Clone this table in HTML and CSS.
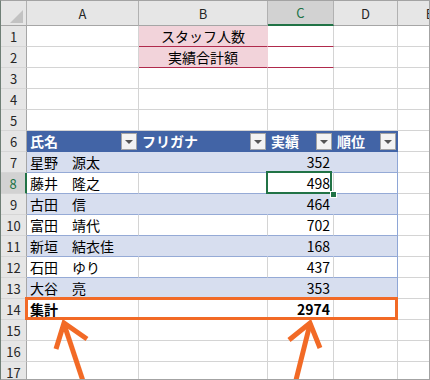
FILE: index.html
```html
<!DOCTYPE html>
<html lang="ja">
<head>
<meta charset="utf-8">
<title>スタッフ実績</title>
<link rel="stylesheet" href="styles.css">
</head>
<body>
<div class="frame">
  <div class="sheet">
    <!-- column headers -->
    <div class="ch corner"><span class="corner-tri"></span></div>
    <div class="ch">A</div>
    <div class="ch">B</div>
    <div class="ch ch-on">C</div>
    <div class="ch">D</div>
    <div class="ch">E</div>

    <!-- 1 -->
    <div class="rh">1</div>
    <div class="c"></div>
    <div class="c label">スタッフ人数</div>
    <div class="c input"></div>
    <div class="c"></div>
    <div class="c"></div>
    <!-- 2 -->
    <div class="rh">2</div>
    <div class="c"></div>
    <div class="c label">実績合計額</div>
    <div class="c input"></div>
    <div class="c"></div>
    <div class="c"></div>
    <!-- 3 -->
    <div class="rh">3</div>
    <div class="c"></div><div class="c"></div><div class="c"></div><div class="c"></div><div class="c"></div>
    <!-- 4 -->
    <div class="rh">4</div>
    <div class="c"></div><div class="c"></div><div class="c"></div><div class="c"></div><div class="c"></div>
    <!-- 5 -->
    <div class="rh">5</div>
    <div class="c"></div><div class="c"></div><div class="c"></div><div class="c"></div><div class="c"></div>

    <!-- 6: table header -->
    <div class="rh">6</div>
    <div class="c th"><span class="th-text">氏名</span><span class="dd"></span></div>
    <div class="c th"><span class="th-text">フリガナ</span><span class="dd"></span></div>
    <div class="c th"><span class="th-text">実績</span><span class="dd"></span></div>
    <div class="c th last"><span class="th-text">順位</span><span class="dd"></span></div>
    <div class="c"></div>

    <!-- 7 -->
    <div class="rh">7</div>
    <div class="c band">星野　源太</div>
    <div class="c band"></div>
    <div class="c band num">352</div>
    <div class="c band last"></div>
    <div class="c"></div>
    <!-- 8 -->
    <div class="rh rh-on">8</div>
    <div class="c row">藤井　隆之</div>
    <div class="c row"></div>
    <div class="c row num active">498<span class="sel"><span class="handle"></span></span></div>
    <div class="c row last"></div>
    <div class="c"></div>
    <!-- 9 -->
    <div class="rh">9</div>
    <div class="c band">古田　信</div>
    <div class="c band"></div>
    <div class="c band num">464</div>
    <div class="c band last"></div>
    <div class="c"></div>
    <!-- 10 -->
    <div class="rh">10</div>
    <div class="c row">富田　靖代</div>
    <div class="c row"></div>
    <div class="c row num">702</div>
    <div class="c row last"></div>
    <div class="c"></div>
    <!-- 11 -->
    <div class="rh">11</div>
    <div class="c band">新垣　結衣佳</div>
    <div class="c band"></div>
    <div class="c band num">168</div>
    <div class="c band last"></div>
    <div class="c"></div>
    <!-- 12 -->
    <div class="rh">12</div>
    <div class="c row">石田　ゆり</div>
    <div class="c row"></div>
    <div class="c row num">437</div>
    <div class="c row last"></div>
    <div class="c"></div>
    <!-- 13 -->
    <div class="rh">13</div>
    <div class="c band">大谷　亮</div>
    <div class="c band"></div>
    <div class="c band num">353</div>
    <div class="c band last"></div>
    <div class="c"></div>
    <!-- 14: total row -->
    <div class="rh">14</div>
    <div class="c total">集計</div>
    <div class="c total"></div>
    <div class="c total num">2974</div>
    <div class="c total last"></div>
    <div class="c"></div>
    <!-- 15 -->
    <div class="rh">15</div>
    <div class="c"></div><div class="c"></div><div class="c"></div><div class="c"></div><div class="c"></div>
    <!-- 16 -->
    <div class="rh">16</div>
    <div class="c"></div><div class="c"></div><div class="c"></div><div class="c"></div><div class="c"></div>
    <!-- 17 -->
    <div class="rh">17</div>
    <div class="c"></div><div class="c"></div><div class="c"></div><div class="c"></div><div class="c"></div>
  </div>

  <!-- callout: total row highlight and arrows -->
  <svg class="callout" width="430" height="380" viewBox="0 0 430 380">
    <rect x="26.5" y="298.5" width="370" height="20" fill="none" stroke="#f26a26" stroke-width="3"/>
    <g fill="none" stroke="#f26a26" stroke-width="5" stroke-linejoin="miter" stroke-linecap="butt">
      <line x1="84" y1="384" x2="64" y2="324"/>
      <polyline points="56,349 64,323 87,339"/>
      <line x1="295" y1="384" x2="310" y2="324"/>
      <polyline points="289,340 310,323 320,348"/>
    </g>
  </svg>
</div>
</body>
</html>
```

FILE: styles.css
```css
html, body {
  margin: 0;
  padding: 0;
  background: #ffffff;
}

.frame {
  position: relative;
  width: 430px;
  height: 380px;
  box-sizing: border-box;
  border: 1px solid #a3a3a3;
  border-left-color: #6f7f76;
  overflow: hidden;
  font-family: "Noto Sans CJK JP", "Noto Sans", sans-serif;
  color: #000;
}

.sheet {
  display: grid;
  grid-template-columns: 26px 112px 129px 66px 64px 64px;
  grid-template-rows: 25px repeat(17, 21px);
}

/* ordinary cells */
.c {
  box-sizing: border-box;
  border-right: 1px solid #d4d4d4;
  border-bottom: 1px solid #d4d4d4;
  display: flex;
  align-items: center;
  padding: 0 3px;
  font-size: 14px;
  line-height: 20px;
  white-space: nowrap;
  overflow: hidden;
}

.num {
  justify-content: flex-end;
}

/* column / row headers */
.ch {
  box-sizing: border-box;
  background: #e6e6e6;
  border-right: 1px solid #b1b1b1;
  border-bottom: 1px solid #a6a6a6;
  display: flex;
  align-items: center;
  justify-content: center;
  font-size: 13px;
  color: #262626;
}

.ch-on {
  background: #d2d2d2;
  color: #217346;
  border-bottom: 2px solid #217346;
}

.corner {
  position: relative;
}

.corner-tri {
  position: absolute;
  right: 3px;
  bottom: 2px;
  width: 0;
  height: 0;
  border-left: 13px solid transparent;
  border-bottom: 13px solid #c2c2c2;
}

.rh {
  box-sizing: border-box;
  background: #e6e6e6;
  border-right: 1px solid #a6a6a6;
  border-bottom: 1px solid #d6d6d6;
  display: flex;
  align-items: center;
  justify-content: center;
  font-size: 13px;
  color: #262626;
}

.rh-on {
  background: #d2d2d2;
  color: #217346;
  border-right: 2px solid #217346;
}

/* input block at the top */
.label {
  background: #f2d3da;
  border-right-color: #f2d3da;
  border-bottom-color: #b02a4c;
  justify-content: center;
}

.input {
  border-bottom-color: #b02a4c;
}

/* table */
.th {
  background: #4264a6;
  color: #fff;
  font-weight: bold;
  border-right-color: #4264a6;
  border-bottom-color: #4264a6;
  padding-right: 1px;
}

.th-text {
  flex: 1;
}

.dd {
  width: 16px;
  height: 17px;
  box-sizing: border-box;
  border: 1px solid #a4a4a4;
  background: #f3f3f3;
  display: flex;
  align-items: center;
  justify-content: center;
  flex: none;
}

.dd::after {
  content: "";
  width: 0;
  height: 0;
  border-left: 4px solid transparent;
  border-right: 4px solid transparent;
  border-top: 4px solid #555;
  margin-top: 1px;
}

.band {
  background: #d7deef;
  border-right-color: #d7deef;
  border-bottom-color: #95aad6;
}

.row {
  border-bottom-color: #95aad6;
}

.band.last,
.row.last {
  border-right-color: #8ea6d6;
}

.total {
  font-weight: bold;
}

/* active cell */
.active {
  position: relative;
  overflow: visible;
}

.sel {
  position: absolute;
  left: -2px;
  top: -2px;
  width: 66px;
  height: 23px;
  box-sizing: border-box;
  border: 2px solid #217346;
}

.handle {
  position: absolute;
  left: 63px;
  top: 19px;
  width: 5px;
  height: 5px;
  background: #217346;
  box-shadow: 0 0 0 1px #fff;
}

/* annotation layer */
.callout {
  position: absolute;
  left: -1px;
  top: -1px;
  pointer-events: none;
}
```
